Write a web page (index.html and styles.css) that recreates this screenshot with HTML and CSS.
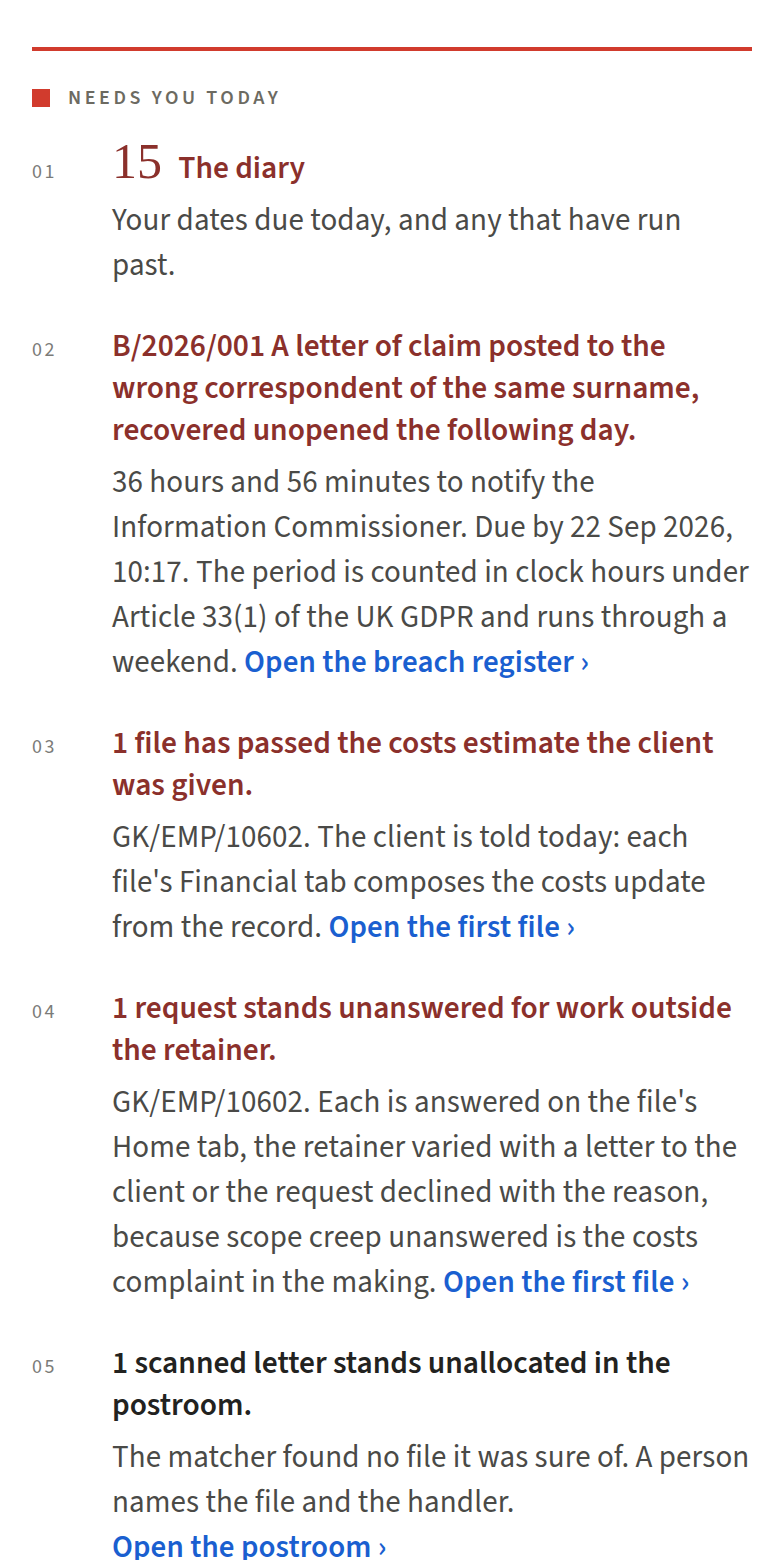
FILE: index.html
```html
<!DOCTYPE html>
<html lang="en">
<head>
    <meta charset="UTF-8">
    <meta name="viewport" content="width=device-width, initial-scale=1.0">
    <title>Needs you today</title>
    <link rel="stylesheet" href="styles.css">
</head>
<body>
    <section class="today">
        <div class="rule"></div>

        <h2 class="eyebrow"><span class="eyebrow-mark"></span>Needs you today</h2>

        <ol class="needs">
            <li class="item">
                <span class="item-no">01</span>
                <div class="item-main">
                    <a class="item-title" href="#"><span class="count">15</span> The diary</a>
                    <p class="item-body">Your dates due today, and any that have run past.</p>
                </div>
            </li>

            <li class="item">
                <span class="item-no">02</span>
                <div class="item-main">
                    <p class="item-title">B/2026/001 A letter of claim posted to the wrong correspondent of the same surname, recovered unopened the following day.</p>
                    <p class="item-body">36 hours and 56 minutes to notify the Information Commissioner. Due by 22 Sep 2026, 10:17. The period is counted in clock hours under Article 33(1) of the UK GDPR and runs through a weekend. <a class="go" href="#">Open the breach register ›</a></p>
                </div>
            </li>

            <li class="item">
                <span class="item-no">03</span>
                <div class="item-main">
                    <p class="item-title">1 file has passed the costs estimate the client was given.</p>
                    <p class="item-body">GK/EMP/10602. The client is told today: each file's Financial tab composes the costs update from the record. <a class="go" href="#">Open the first file ›</a></p>
                </div>
            </li>

            <li class="item">
                <span class="item-no">04</span>
                <div class="item-main">
                    <p class="item-title">1 request stands unanswered for work outside the retainer.</p>
                    <p class="item-body">GK/EMP/10602. Each is answered on the file's Home tab, the retainer varied with a letter to the client or the request declined with the reason, because scope creep unanswered is the costs complaint in the making. <a class="go" href="#">Open the first file ›</a></p>
                </div>
            </li>

            <li class="item">
                <span class="item-no">05</span>
                <div class="item-main">
                    <p class="item-title item-title-plain">1 scanned letter stands unallocated in the postroom.</p>
                    <p class="item-body">The matcher found no file it was sure of. A person names the file and the handler. <a class="go" href="#">Open the postroom ›</a></p>
                </div>
            </li>
        </ol>
    </section>
</body>
</html>
```

FILE: styles.css
```css
body {
    margin: 0;
    background: #fff;
    font-family: "Source Sans Pro", "Source Sans 3", Lato, sans-serif;
    color: #4a4a47;
}

.today {
    padding: 47px 32px 0;
}

.rule {
    border-top: 4px solid #d13b2d;
}

.eyebrow {
    display: flex;
    align-items: center;
    gap: 18px;
    margin: 33px 0 0;
    font-size: 20px;
    font-weight: 600;
    letter-spacing: 3.6px;
    text-transform: uppercase;
    color: #6c6a61;
}

.eyebrow-mark {
    width: 18px;
    height: 18px;
    background: #d13b2d;
}

.needs {
    list-style: none;
    margin: 28px 0 0;
    padding: 0;
}

.item {
    display: grid;
    grid-template-columns: 80px 638px;
    align-items: baseline;
    margin-bottom: 38px;
}

.item-no {
    font-size: 20px;
    letter-spacing: 2.5px;
    color: #7b7b78;
}

.item-main p {
    margin: 0;
}

.item-title {
    display: block;
    font-size: 31.4px;
    font-weight: 600;
    line-height: 42px;
    color: #8b302b;
    text-decoration: none;
}

.item-title-plain {
    color: #222220;
}

.count {
    font-family: "Liberation Serif", "DejaVu Serif", serif;
    font-size: 50px;
    font-weight: 400;
    margin-right: 10px;
}

.item-body {
    margin-top: 8px !important;
    font-size: 31px;
    line-height: 45px;
    letter-spacing: 0.1px;
}

.go {
    font-weight: 600;
    color: #1a5fd0;
    text-decoration: none;
    white-space: nowrap;
}
```
